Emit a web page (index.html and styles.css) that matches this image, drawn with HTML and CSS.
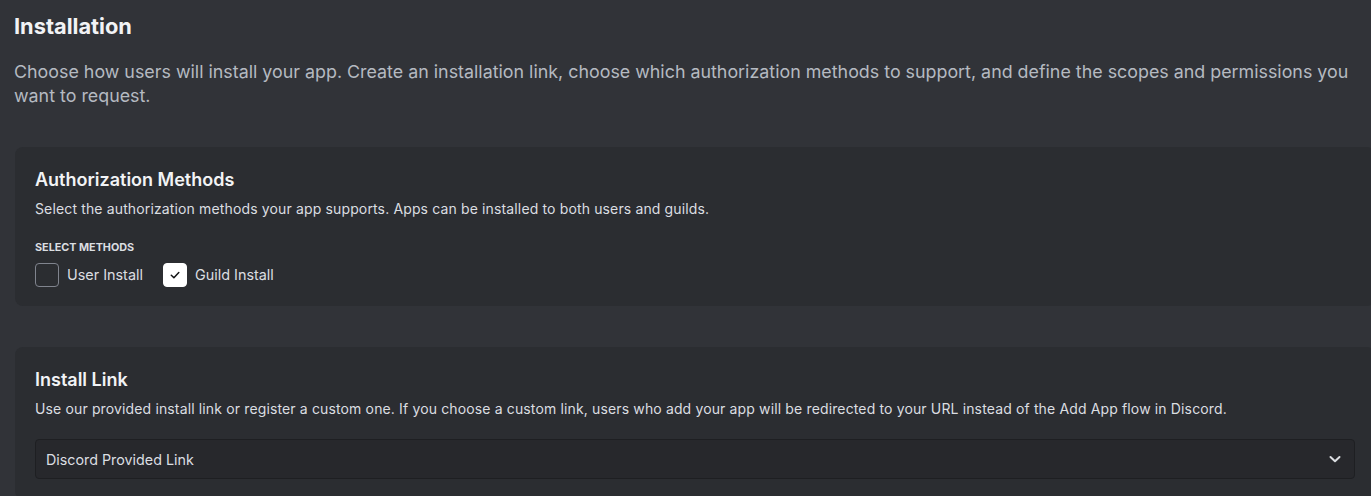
FILE: index.html
```html
<!DOCTYPE html>
<html>
<head>
<meta charset="utf-8">
<link rel="stylesheet" href="styles.css">
</head>
<body>
<div class="page">
  <h1 class="title">Installation</h1>
  <p class="lead">Choose how users will install your app. Create an installation link, choose which authorization methods to support, and define the scopes and permissions you want to request.</p>

  <section class="card card-auth">
    <h2 class="card-title">Authorization Methods</h2>
    <p class="card-desc">Select the authorization methods your app supports. Apps can be installed to both users and guilds.</p>
    <div class="label">SELECT METHODS</div>
    <div class="checks">
      <label class="check"><span class="box"></span><span class="check-text">User Install</span></label>
      <label class="check"><span class="box box-on"><svg width="12" height="12" viewBox="0 0 12 12"><path d="M2.3 6.2 L4.9 8.7 L9.8 3.6" fill="none" stroke="#111214" stroke-width="1.5" stroke-linecap="round" stroke-linejoin="round"/></svg></span><span class="check-text">Guild Install</span></label>
    </div>
  </section>

  <section class="card card-link">
    <h2 class="card-title">Install Link</h2>
    <p class="card-desc">Use our provided install link or register a custom one. If you choose a custom link, users who add your app will be redirected to your URL instead of the Add App flow in Discord.</p>
    <div class="select">
      <span class="select-text">Discord Provided Link</span>
      <svg class="chev" width="14" height="14" viewBox="0 0 14 14"><path d="M2.5 5 L7 9.2 L11.5 5" fill="none" stroke="#dbdee1" stroke-width="2" stroke-linecap="round" stroke-linejoin="round"/></svg>
    </div>
  </section>
</div>
</body>
</html>
```

FILE: styles.css
```css
html, body {
  margin: 0;
  padding: 0;
  background: #313338;
  overflow: hidden;
}
body {
  font-family: Inter, "Noto Sans", sans-serif;
  color: #dbdee1;
  width: 1371px;
  height: 496px;
}
.page {
  padding: 12px 0 0 14px;
  width: 1361px;
}
.title {
  margin: 0;
  font-size: 21.8px;
  line-height: 28px;
  font-weight: 700;
  color: #f2f3f5;
}
.lead {
  margin: 20px 0 0 0;
  font-size: 17.85px;
  line-height: 24px;
  color: #b5bac1;
  padding-right: 10px;
}
.card {
  background: #2b2d31;
  border-radius: 8px;
  margin-left: 1px;
  padding: 21px 20px 20px 20px;
  box-sizing: border-box;
}
.card-auth {
  margin-top: 39px;
  height: 159px;
}
.card-link {
  margin-top: 41px;
}
.card-title {
  margin: 0;
  font-size: 18px;
  line-height: 24px;
  font-weight: 600;
  color: #f2f3f5;
}
.card-desc {
  margin: 7px 0 0 0;
  font-size: 14px;
  letter-spacing: 0.14px;
  line-height: 20px;
  color: #dbdee1;
}
.label {
  margin-top: 22px;
  font-size: 10.8px;
  line-height: 14px;
  font-weight: 700;
  color: #dbdee1;
}
.checks {
  display: flex;
  gap: 20px;
  margin-top: 8px;
}
.check {
  display: flex;
  align-items: center;
  gap: 8px;
}
.box {
  width: 24px;
  height: 24px;
  box-sizing: border-box;
  border: 1px solid #80848e;
  border-radius: 4px;
  display: flex;
  align-items: center;
  justify-content: center;
}
.box-on {
  background: #ffffff;
  border-color: #ffffff;
}
.check-text {
  font-size: 14.4px;
  line-height: 20px;
  color: #dbdee1;
}
.select {
  margin-top: 20px;
  height: 40px;
  box-sizing: border-box;
  border: 1px solid #1e1f22;
  border-radius: 4px;
  background: #27282c;
  display: flex;
  align-items: center;
  justify-content: space-between;
  padding: 0 12px 0 10px;
}
.select-text {
  font-size: 14.3px;
  color: #dbdee1;
}
.chev {
  display: block;
}
```
